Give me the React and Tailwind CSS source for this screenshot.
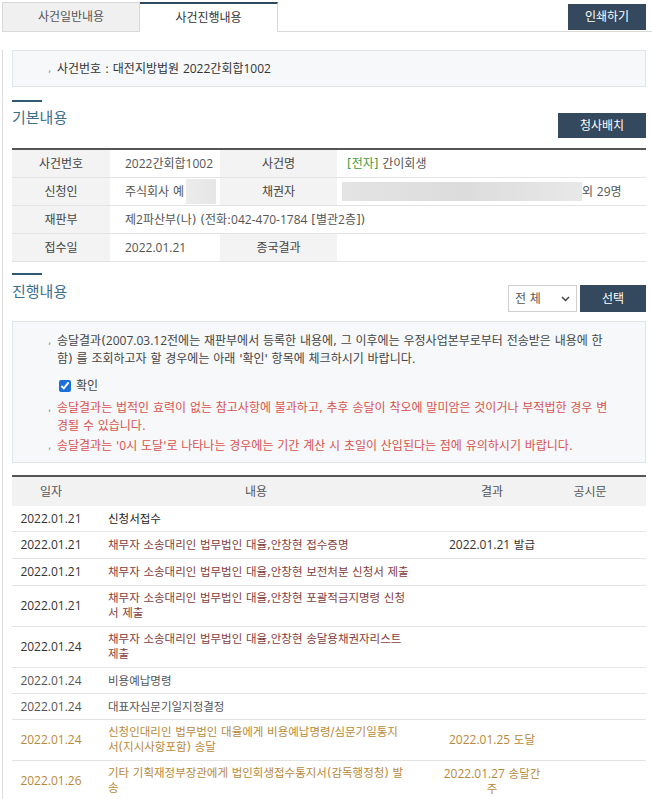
import React from "react";

function Tx({ s }) {
  const parts = s.split(/([0-9][0-9.\-]*)/);
  return (
    <>
      {parts.map((p, i) =>
        i % 2 === 1 ? (
          <span key={i} className="font-[family-name:'Open_Sans',sans-serif] text-[12px]">
            {p}
          </span>
        ) : (
          <React.Fragment key={i}>{p}</React.Fragment>
        )
      )}
    </>
  );
}

function Bullet() {
  return <span className="w-[9px] shrink-0 text-[#888] text-[10px]">,</span>;
}

const rows = [
  { d: "2022.01.21", c: "신청서접수", r: "", h: "h-[26px]", dc: "text-[#333]", cc: "text-[#222]" },
  { d: "2022.01.21", c: "채무자 소송대리인 법무법인 대율,안창현 접수증명", r: "2022.01.21 발급", h: "h-[27px]", dc: "text-[#333]", cc: "text-[#843d3d]", rc: "text-[#333]" },
  { d: "2022.01.21", c: "채무자 소송대리인 법무법인 대율,안창현 보전처분 신청서 제출", r: "", h: "h-[27px]", dc: "text-[#333]", cc: "text-[#843d3d]" },
  { d: "2022.01.21", c: ["채무자 소송대리인 법무법인 대율,안창현 포괄적금지명령 신청", "서 제출"], r: "", h: "h-[41px]", dc: "text-[#333]", cc: "text-[#843d3d]" },
  { d: "2022.01.24", c: ["채무자 소송대리인 법무법인 대율,안창현 송달용채권자리스트", "제출"], r: "", h: "h-[41px]", dc: "text-[#333]", cc: "text-[#843d3d]" },
  { d: "2022.01.24", c: "비용예납명령", r: "", h: "h-[26px]", dc: "text-[#555]", cc: "text-[#555]" },
  { d: "2022.01.24", c: "대표자심문기일지정결정", r: "", h: "h-[26px]", dc: "text-[#555]", cc: "text-[#555]" },
  { d: "2022.01.24", c: ["신청인대리인 법무법인 대율에게 비용예납명령/심문기일통지", "서(지시사항포함) 송달"], r: "2022.01.25 도달", h: "h-[41px]", dc: "text-[#b8893a]", cc: "text-[#b8893a]", rc: "text-[#b8893a]" },
  { d: "2022.01.26", c: ["기타 기획재정부장관에게 법인회생접수통지서(감독행정청) 발", "송"], r: ["2022.01.27 송달간", "주"], h: "h-[41px]", dc: "text-[#b8893a]", cc: "text-[#b8893a]", rc: "text-[#b8893a]" },
];

function Lines({ v }) {
  if (Array.isArray(v)) {
    return (
      <span className="leading-[15px]">
        <Tx s={v[0]} />
        <br />
        <Tx s={v[1]} />
      </span>
    );
  }
  return (
    <span>
      <Tx s={v} />
    </span>
  );
}

const label = "bg-[#f3f3f3] flex items-center justify-center text-[#444]";
const value = "flex items-center pl-[15px] text-[#555]";

export default function App() {
  return (
    <div className="w-[652px] h-[799px] overflow-hidden bg-white text-[12px] leading-[16px] text-[#444] font-[family-name:'DejaVu_Sans','Noto_Sans_CJK_KR',sans-serif]">
      {/* tabs */}
      <div className="flex items-end pl-[2px] pt-[2px]">
        <div className="w-[138px] h-[30px] flex items-center justify-center bg-[#f0f0f0] border border-[#d9d9d9] text-[#555]">
          사건일반내용
        </div>
        <div className="w-[138px] h-[30px] flex items-center justify-center bg-white border-t-2 border-t-[#2f4a5c] border-r border-r-[#d9d9d9] text-[#333]">
          사건진행내용
        </div>
        <div className="flex-1 h-[30px] border-b border-[#d9d9d9] flex justify-end items-start pt-[2px] pr-[6px]">
          <button className="w-[78px] h-[26px] bg-[#34495e] text-white">인쇄하기</button>
        </div>
      </div>

      <div className="ml-[2px] border-l border-[#dcdcdc] pl-[9px] pr-[6px] pb-[40px]">
        {/* case number */}
        <div className="mt-[18px] h-[37px] flex items-center pl-[35px] bg-[#f6f8fa] border border-[#dfe4e8] text-[#333]">
          <Bullet />
          <span>
            <Tx s="사건번호 : 대전지방법원 2022간회합1002" />
          </span>
        </div>

        {/* 기본내용 */}
        <div className="mt-[13px] w-[30px] h-[2px] bg-[#2e5b73]" />
        <div className="flex justify-between items-start">
          <h2 className="mt-[6px] text-[15px] leading-[20px] text-[#3b6e8a]">기본내용</h2>
          <button className="mt-[11px] w-[88px] h-[25px] bg-[#34495e] text-white">청사배치</button>
        </div>

        <div className="mt-[10px] border-t-2 border-[#555]">
          <div className="grid grid-cols-[98px_110px_117px_1fr] h-[28px] border-b border-[#e3e3e3]">
            <div className={label}>사건번호</div>
            <div className={value}>
              <Tx s="2022간회합1002" />
            </div>
            <div className={label}>사건명</div>
            <div className="flex items-center pl-[10px] text-[#555]">
              <span className="text-[#3c9b3c]">[전자]</span>&nbsp;간이회생
            </div>
          </div>
          <div className="grid grid-cols-[98px_110px_117px_1fr] h-[28px] border-b border-[#e3e3e3]">
            <div className={label}>신청인</div>
            <div className={value}>
              주식회사 예<span className="ml-[2px] w-[30px] h-[25px] bg-gradient-to-r from-[#ececec] to-[#e6e6e6]" />
            </div>
            <div className={label}>채권자</div>
            <div className="flex items-center pl-[5px] text-[#555]">
              <span className="w-[240px] h-[19px] bg-gradient-to-r from-[#e4e4e4] via-[#dcdcdc] to-[#e8e8e8]" />
              <span>
                <Tx s="외 29명" />
              </span>
            </div>
          </div>
          <div className="grid grid-cols-[98px_1fr] h-[28px] border-b border-[#e3e3e3]">
            <div className={label}>재판부</div>
            <div className={value}>
              <span>
                <Tx s="제2파산부(나) (전화:042-470-1784 [별관2층])" />
              </span>
            </div>
          </div>
          <div className="grid grid-cols-[98px_110px_117px_1fr] h-[28px] border-b border-[#e3e3e3]">
            <div className={label}>접수일</div>
            <div className={value}>
              <Tx s="2022.01.21" />
            </div>
            <div className={label}>종국결과</div>
            <div />
          </div>
        </div>

        {/* 진행내용 */}
        <div className="mt-[11px] w-[30px] h-[2px] bg-[#2e5b73]" />
        <div className="flex justify-between items-start">
          <h2 className="mt-[7px] text-[15px] leading-[20px] text-[#3b6e8a]">진행내용</h2>
          <div className="mt-[10px] flex gap-[3px]">
            <div className="w-[69px] h-[27px] border border-[#cfcfcf] flex items-center justify-between pl-[6px] pr-[6px] text-[#555]">
              <span>전 체</span>
              <svg width="9" height="6" viewBox="0 0 9 6">
                <path d="M1 1l3.5 3.5L8 1" fill="none" stroke="#444" strokeWidth="1.5" />
              </svg>
            </div>
            <button className="w-[66px] h-[27px] bg-[#34495e] text-white">선택</button>
          </div>
        </div>

        <div className="mt-[9px] h-[142px] bg-[#f6f8fa] border border-[#dfe4e8] pl-[35px] pt-[10px] leading-[18px]">
          <div className="flex text-[#444]">
            <Bullet />
            <span>
              <Tx s="송달결과(2007.03.12전에는 재판부에서 등록한 내용에, 그 이후에는 우정사업본부로부터 전송받은 내용에 한" />
              <br />
              함) 를 조회하고자 할 경우에는 아래 '확인' 항목에 체크하시기 바랍니다.
            </span>
          </div>
          <label className="mt-[9px] ml-[11px] flex items-center gap-[5px] text-[#444]">
            <input type="checkbox" defaultChecked className="m-0 w-[12px] h-[12px] accent-[#1a6fd8]" />
            <span>확인</span>
          </label>
          <div className="mt-[4px] flex text-[#d9534f]">
            <Bullet />
            <span>
              송달결과는 법적인 효력이 없는 참고사항에 불과하고, 추후 송달이 착오에 말미암은 것이거나 부적법한 경우 변
              <br />
              경될 수 있습니다.
            </span>
          </div>
          <div className="mt-[2px] flex text-[#d9534f]">
            <Bullet />
            <span>
              <Tx s="송달결과는 '0시 도달'로 나타나는 경우에는 기간 계산 시 초일이 산입된다는 점에 유의하시기 바랍니다." />
            </span>
          </div>
        </div>

        {/* progress table */}
        <div className="mt-[12px] border-t-2 border-[#555]">
          <div className="grid grid-cols-[78px_332px_140px_1fr] h-[29px] bg-[#f2f2f2] text-[#555] items-center">
            <div className="text-center">일자</div>
            <div className="text-center">내용</div>
            <div className="text-center">결과</div>
            <div className="text-center pr-[28px]">공시문</div>
          </div>
          {rows.map((r, i) => (
            <div key={i} className={`grid grid-cols-[78px_332px_140px_1fr] border-b border-[#e3e3e3] text-[11.5px] ${r.h}`}>
              <div className={`flex items-center justify-center ${r.dc}`}>
                <Tx s={r.d} />
              </div>
              <div className={`flex items-center pl-[18px] whitespace-nowrap ${r.cc}`}>
                <Lines v={r.c} />
              </div>
              <div className={`flex items-center justify-center text-center whitespace-nowrap ${r.rc || ""}`}>
                <Lines v={r.r} />
              </div>
              <div />
            </div>
          ))}
        </div>
      </div>
    </div>
  );
}
